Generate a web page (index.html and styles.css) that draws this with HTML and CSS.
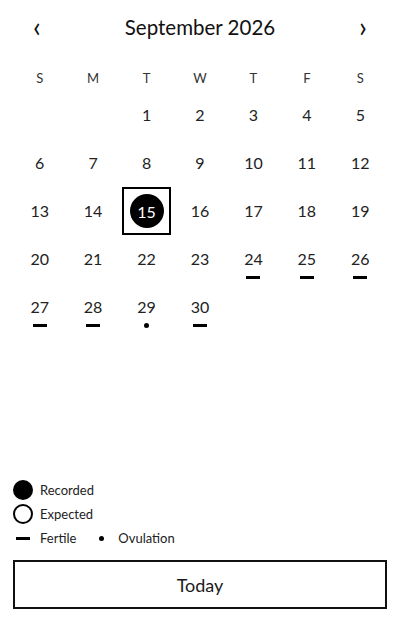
FILE: index.html
```html
<!DOCTYPE html>
<html>
<head>
<meta charset="utf-8">
<link rel="stylesheet" href="styles.css">
</head>
<body>
<div class="page">
  <div class="header">
    <button class="nav">&#8249;</button>
    <div class="title">September 2026</div>
    <button class="nav">&#8250;</button>
  </div>
  <div class="weekdays">
    <div>S</div><div>M</div><div>T</div><div>W</div><div>T</div><div>F</div><div>S</div>
  </div>
  <div class="grid">
    <div class="cell"></div>
    <div class="cell"></div>
    <div class="cell"><span class="num">1</span></div>
    <div class="cell"><span class="num">2</span></div>
    <div class="cell"><span class="num">3</span></div>
    <div class="cell"><span class="num">4</span></div>
    <div class="cell"><span class="num">5</span></div>

    <div class="cell"><span class="num">6</span></div>
    <div class="cell"><span class="num">7</span></div>
    <div class="cell"><span class="num">8</span></div>
    <div class="cell"><span class="num">9</span></div>
    <div class="cell"><span class="num">10</span></div>
    <div class="cell"><span class="num">11</span></div>
    <div class="cell"><span class="num">12</span></div>

    <div class="cell"><span class="num">13</span></div>
    <div class="cell"><span class="num">14</span></div>
    <div class="cell selected"><div class="box"><span class="circle">15</span></div></div>
    <div class="cell"><span class="num">16</span></div>
    <div class="cell"><span class="num">17</span></div>
    <div class="cell"><span class="num">18</span></div>
    <div class="cell"><span class="num">19</span></div>

    <div class="cell"><span class="num">20</span></div>
    <div class="cell"><span class="num">21</span></div>
    <div class="cell"><span class="num">22</span></div>
    <div class="cell"><span class="num">23</span></div>
    <div class="cell"><span class="num">24</span><span class="dash"></span></div>
    <div class="cell"><span class="num">25</span><span class="dash"></span></div>
    <div class="cell"><span class="num">26</span><span class="dash"></span></div>

    <div class="cell"><span class="num">27</span><span class="dash"></span></div>
    <div class="cell"><span class="num">28</span><span class="dash"></span></div>
    <div class="cell"><span class="num">29</span><span class="dot"></span></div>
    <div class="cell"><span class="num">30</span><span class="dash"></span></div>
  </div>

  <div class="legend">
    <div class="lrow"><span class="lg-filled"></span><span>Recorded</span></div>
    <div class="lrow"><span class="lg-outline"></span><span>Expected</span></div>
    <div class="lrow">
      <span class="lg-dash-wrap"><span class="lg-dash"></span></span><span>Fertile</span>
      <span class="lg-dot-wrap"><span class="lg-dot"></span></span><span>Ovulation</span>
    </div>
  </div>

  <button class="today">Today</button>
</div>
</body>
</html>
```
FILE: styles.css
```css
html, body {
  margin: 0;
  padding: 0;
  background: #fff;
}
body {
  font-family: Lato, "Open Sans", sans-serif;
  color: #1a1a1a;
}
.page {
  box-sizing: border-box;
  height: 627px;
  padding: 0 13px 18px 13px;
  display: flex;
  flex-direction: column;
}
.header {
  height: 58px;
  display: flex;
  align-items: center;
  justify-content: space-between;
}
.nav {
  width: 48px;
  height: 48px;
  border: none;
  background: none;
  padding: 0 0 6px 0;
  font-family: Lato, sans-serif;
  font-size: 28px;
  font-weight: 400;
  color: #111;
  line-height: 1;
}
.title {
  font-size: 20.5px;
  color: #111;
  padding-bottom: 4px;
}
.weekdays {
  height: 33px;
  display: grid;
  grid-template-columns: repeat(7, 1fr);
  align-items: end;
}
.weekdays div {
  text-align: center;
  font-size: 13px;
  line-height: 16px;
  padding-bottom: 5px;
  color: #333;
}
.grid {
  display: grid;
  grid-template-columns: repeat(7, 1fr);
  grid-auto-rows: 48px;
}
.cell {
  display: flex;
  flex-direction: column;
  align-items: center;
  padding-top: 14px;
  box-sizing: border-box;
}
.num {
  font-size: 16px;
  line-height: 20px;
  color: #222;
}
.dash {
  width: 14px;
  height: 3px;
  background: #000;
  margin-top: 7px;
}
.dot {
  width: 5px;
  height: 5px;
  border-radius: 50%;
  background: #000;
  margin-top: 6px;
}
.cell.selected {
  padding: 0 2px;
  align-items: stretch;
}
.box {
  flex: 1;
  border: 2px solid #000;
  display: flex;
  align-items: center;
  justify-content: center;
}
.circle {
  width: 34px;
  height: 34px;
  border-radius: 50%;
  background: #000;
  color: #fff;
  font-size: 16px;
  display: flex;
  align-items: center;
  justify-content: center;
}
.legend {
  margin-top: auto;
  display: flex;
  flex-direction: column;
  gap: 4px;
  font-size: 13px;
  color: #222;
}
.lrow {
  display: flex;
  align-items: center;
  height: 20px;
}
.lg-filled {
  width: 20px;
  height: 20px;
  border-radius: 50%;
  background: #000;
  margin-right: 7px;
}
.lg-outline {
  width: 20px;
  height: 20px;
  box-sizing: border-box;
  border-radius: 50%;
  border: 2px solid #000;
  margin-right: 7px;
}
.lg-dash-wrap, .lg-dot-wrap {
  width: 20px;
  display: flex;
  justify-content: center;
  margin-right: 7px;
}
.lg-dash {
  width: 14px;
  height: 3px;
  background: #000;
}
.lg-dot-wrap {
  margin-left: 15px;
  margin-right: 7px;
}
.lg-dot {
  width: 5px;
  height: 5px;
  border-radius: 50%;
  background: #000;
}
.today {
  margin-top: 12px;
  height: 49px;
  border: 2px solid #111;
  background: #fff;
  font-family: Lato, sans-serif;
  font-size: 18px;
  color: #1a1a1a;
  padding: 0;
}
```
